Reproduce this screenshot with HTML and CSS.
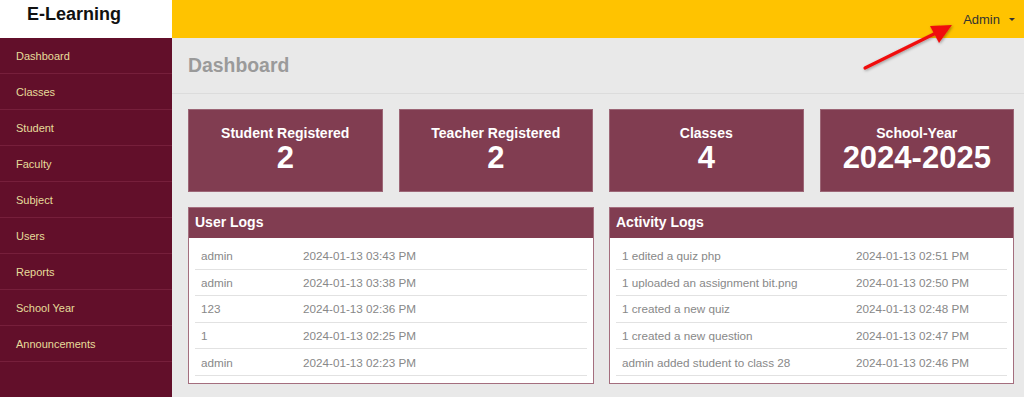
FILE: index.html
```html
<!DOCTYPE html>
<html>
<head>
<meta charset="utf-8">
<link rel="stylesheet" href="styles.css">
</head>
<body>
<div class="app">
  <aside class="sidebar">
    <div class="brand">E-Learning</div>
    <nav class="nav">
      <a class="nav-item">Dashboard</a>
      <a class="nav-item">Classes</a>
      <a class="nav-item">Student</a>
      <a class="nav-item">Faculty</a>
      <a class="nav-item">Subject</a>
      <a class="nav-item">Users</a>
      <a class="nav-item">Reports</a>
      <a class="nav-item">School Year</a>
      <a class="nav-item">Announcements</a>
    </nav>
  </aside>
  <main class="main">
    <header class="topbar">
      <span class="admin">Admin <span class="caret"></span></span>
    </header>
    <div class="page-head"><h1>Dashboard</h1></div>
    <section class="stats">
      <div class="stat"><div class="stat-title">Student Registered</div><div class="stat-num">2</div></div>
      <div class="stat"><div class="stat-title">Teacher Registered</div><div class="stat-num">2</div></div>
      <div class="stat"><div class="stat-title">Classes</div><div class="stat-num">4</div></div>
      <div class="stat"><div class="stat-title">School-Year</div><div class="stat-num">2024-2025</div></div>
    </section>
    <section class="panels">
      <div class="panel">
        <div class="panel-head">User Logs</div>
        <div class="panel-body">
          <div class="row"><span class="c1 user">admin</span><span>2024-01-13 03:43 PM</span></div>
          <div class="row"><span class="c1 user">admin</span><span>2024-01-13 03:38 PM</span></div>
          <div class="row"><span class="c1 user">123</span><span>2024-01-13 02:36 PM</span></div>
          <div class="row"><span class="c1 user">1</span><span>2024-01-13 02:25 PM</span></div>
          <div class="row"><span class="c1 user">admin</span><span>2024-01-13 02:23 PM</span></div>
        </div>
      </div>
      <div class="panel">
        <div class="panel-head">Activity Logs</div>
        <div class="panel-body">
          <div class="row"><span class="c1 act">1 edited a quiz php</span><span>2024-01-13 02:51 PM</span></div>
          <div class="row"><span class="c1 act">1 uploaded an assignment bit.png</span><span>2024-01-13 02:50 PM</span></div>
          <div class="row"><span class="c1 act">1 created a new quiz</span><span>2024-01-13 02:48 PM</span></div>
          <div class="row"><span class="c1 act">1 created a new question</span><span>2024-01-13 02:47 PM</span></div>
          <div class="row"><span class="c1 act">admin added student to class 28</span><span>2024-01-13 02:46 PM</span></div>
        </div>
      </div>
    </section>
  </main>
</div>
<svg class="arrow" width="110" height="70" viewBox="0 0 110 70">
  <defs>
    <filter id="sh" x="-20%" y="-20%" width="140%" height="140%">
      <feDropShadow dx="1" dy="1" stdDeviation="1.5" flood-color="#000" flood-opacity="0.35"/>
    </filter>
  </defs>
  <g filter="url(#sh)">
    <line x1="9" y1="52" x2="80" y2="17" stroke="#f01010" stroke-width="3.2" stroke-linecap="round"/>
    <polygon points="96,9 74,10 83,27" fill="#f01010"/>
  </g>
</svg>
</body>
</html>
```

FILE: styles.css
```css
* { box-sizing: border-box; }
html, body { margin: 0; padding: 0; }
body {
  font-family: "Liberation Sans", Arial, sans-serif;
  width: 1024px;
  height: 397px;
  overflow: hidden;
  background: #e9e9e9;
  position: relative;
}
.app { display: flex; height: 397px; }
.sidebar {
  width: 172px;
  flex: none;
  background: #620f2a;
  display: flex;
  flex-direction: column;
}
.brand {
  height: 38px;
  background: #fff;
  color: #111;
  font-weight: bold;
  font-size: 18px;
  line-height: 29px;
  padding-left: 27px;
}
.nav { display: flex; flex-direction: column; }
.nav-item {
  height: 36px;
  line-height: 36px;
  padding-left: 16px;
  font-size: 11px;
  color: #e6dc9a;
  border-bottom: 1px solid #761f3b;
}
.main { flex: 1; display: flex; flex-direction: column; }
.topbar {
  height: 38px;
  background: #ffc300;
  display: flex;
  justify-content: flex-end;
  align-items: center;
  padding-right: 9px;
}
.admin { font-size: 13px; color: #333; display: flex; align-items: center; }
.caret {
  display: inline-block;
  margin-left: 9px;
  width: 0; height: 0;
  border-left: 3px solid transparent;
  border-right: 3px solid transparent;
  border-top: 3px solid #333;
}
.page-head {
  height: 56px;
  border-bottom: 1px solid #dcdcdc;
  padding-left: 16px;
  display: flex;
  align-items: center;
}
.page-head h1 {
  margin: 0;
  font-size: 19.4px;
  color: #9a9a9a;
  font-weight: bold;
}
.stats {
  display: grid;
  grid-template-columns: repeat(4, 194.5px);
  gap: 16px;
  padding: 15px 0 0 16px;
}
.stat {
  height: 83px;
  background: #813d51;
  border: 1px solid #9c6676;
  color: #fff;
  text-align: center;
  padding-top: 14px;
}
.stat-title { font-weight: bold; font-size: 14px; line-height: 18px; }
.stat-num { font-weight: bold; font-size: 31px; line-height: 31px; }
.panels {
  display: grid;
  grid-template-columns: 405.5px 404.5px;
  gap: 15.5px;
  padding: 15px 0 0 16px;
  align-items: start;
}
.panel {
  border: 1px solid #a46e7e;
  background: #fff;
}
.panel-head {
  height: 30px;
  background: #813d51;
  color: #fff;
  font-weight: bold;
  font-size: 14px;
  line-height: 28px;
  padding-left: 6px;
}
.panel-body { padding: 5px 6px 7px 6px; }
.row {
  display: flex;
  height: 26.6px;
  align-items: center;
  border-bottom: 1px solid #e2e2e2;
  padding-left: 6px;
  font-size: 11.7px;
  color: #888;
}
.c1.user { width: 102px; }
.c1.act { width: 234px; }
.arrow {
  position: absolute;
  left: 856px;
  top: 16px;
}
```
